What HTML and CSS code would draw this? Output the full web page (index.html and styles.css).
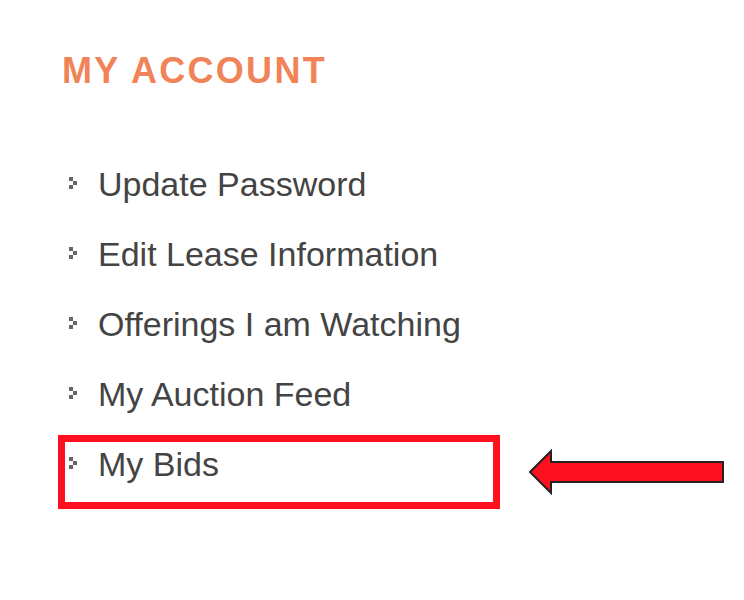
FILE: index.html
```html
<!DOCTYPE html>
<html lang="en">
<head>
  <meta charset="UTF-8">
  <title>My Account</title>
  <link rel="stylesheet" href="styles.css">
</head>
<body>

  <!-- Menu du compte -->
  <div class="account-menu">
    <h2>MY ACCOUNT</h2>
    <ul class="menu-list">
      <li><svg class="bullet" width="8" height="12" viewBox="0 0 8 12"><rect x="0" y="0" width="4" height="4"/><rect x="4" y="4" width="4" height="4"/><rect x="0" y="8" width="4" height="4"/></svg><a href="#">Update Password</a></li>
      <li><svg class="bullet" width="8" height="12" viewBox="0 0 8 12"><rect x="0" y="0" width="4" height="4"/><rect x="4" y="4" width="4" height="4"/><rect x="0" y="8" width="4" height="4"/></svg><a href="#">Edit Lease Information</a></li>
      <li><svg class="bullet" width="8" height="12" viewBox="0 0 8 12"><rect x="0" y="0" width="4" height="4"/><rect x="4" y="4" width="4" height="4"/><rect x="0" y="8" width="4" height="4"/></svg><a href="#">Offerings I am Watching</a></li>
      <li><svg class="bullet" width="8" height="12" viewBox="0 0 8 12"><rect x="0" y="0" width="4" height="4"/><rect x="4" y="4" width="4" height="4"/><rect x="0" y="8" width="4" height="4"/></svg><a href="#">My Auction Feed</a></li>
      <li class="highlight"><svg class="bullet" width="8" height="12" viewBox="0 0 8 12"><rect x="0" y="0" width="4" height="4"/><rect x="4" y="4" width="4" height="4"/><rect x="0" y="8" width="4" height="4"/></svg><a href="#">My Bids</a></li>
    </ul>
  </div>

  <!-- Flèche d'annotation -->
  <svg class="arrow" width="198" height="46" viewBox="0 0 198 46">
    <polygon points="2,23 23,2 23,13 195,13 195,33 23,33 23,44" fill="#ff1020" stroke="#222" stroke-width="2" stroke-linejoin="miter"/>
  </svg>

</body>
</html>
```

FILE: styles.css
```css
body {
  margin: 0;
  background-color: #ffffff;
  font-family: "Liberation Sans", Arial, sans-serif;
  position: relative;
  min-height: 600px;
}

.account-menu {
  padding: 53px 0 0 62px;
}

.account-menu h2 {
  margin: 0;
  font-size: 36px;
  line-height: 36px;
  font-weight: bold;
  letter-spacing: 2.3px;
  color: #f08458;
}

.menu-list {
  list-style: none;
  margin: 60px 0 0 0;
  padding: 0;
}

.menu-list li {
  display: flex;
  align-items: center;
  height: 70px;
  position: relative;
}

.menu-list .bullet {
  fill: #666666;
  margin: 0 21px 0 7px;
  position: relative;
  top: -1px;
}

.menu-list a {
  font-size: 34px;
  color: #444444;
  text-decoration: none;
}

.menu-list li.highlight::after {
  content: "";
  position: absolute;
  left: -4px;
  top: 6px;
  width: 428px;
  height: 60px;
  border: 7px solid #ff1020;
}

.arrow {
  position: absolute;
  left: 528px;
  top: 449px;
}
```
